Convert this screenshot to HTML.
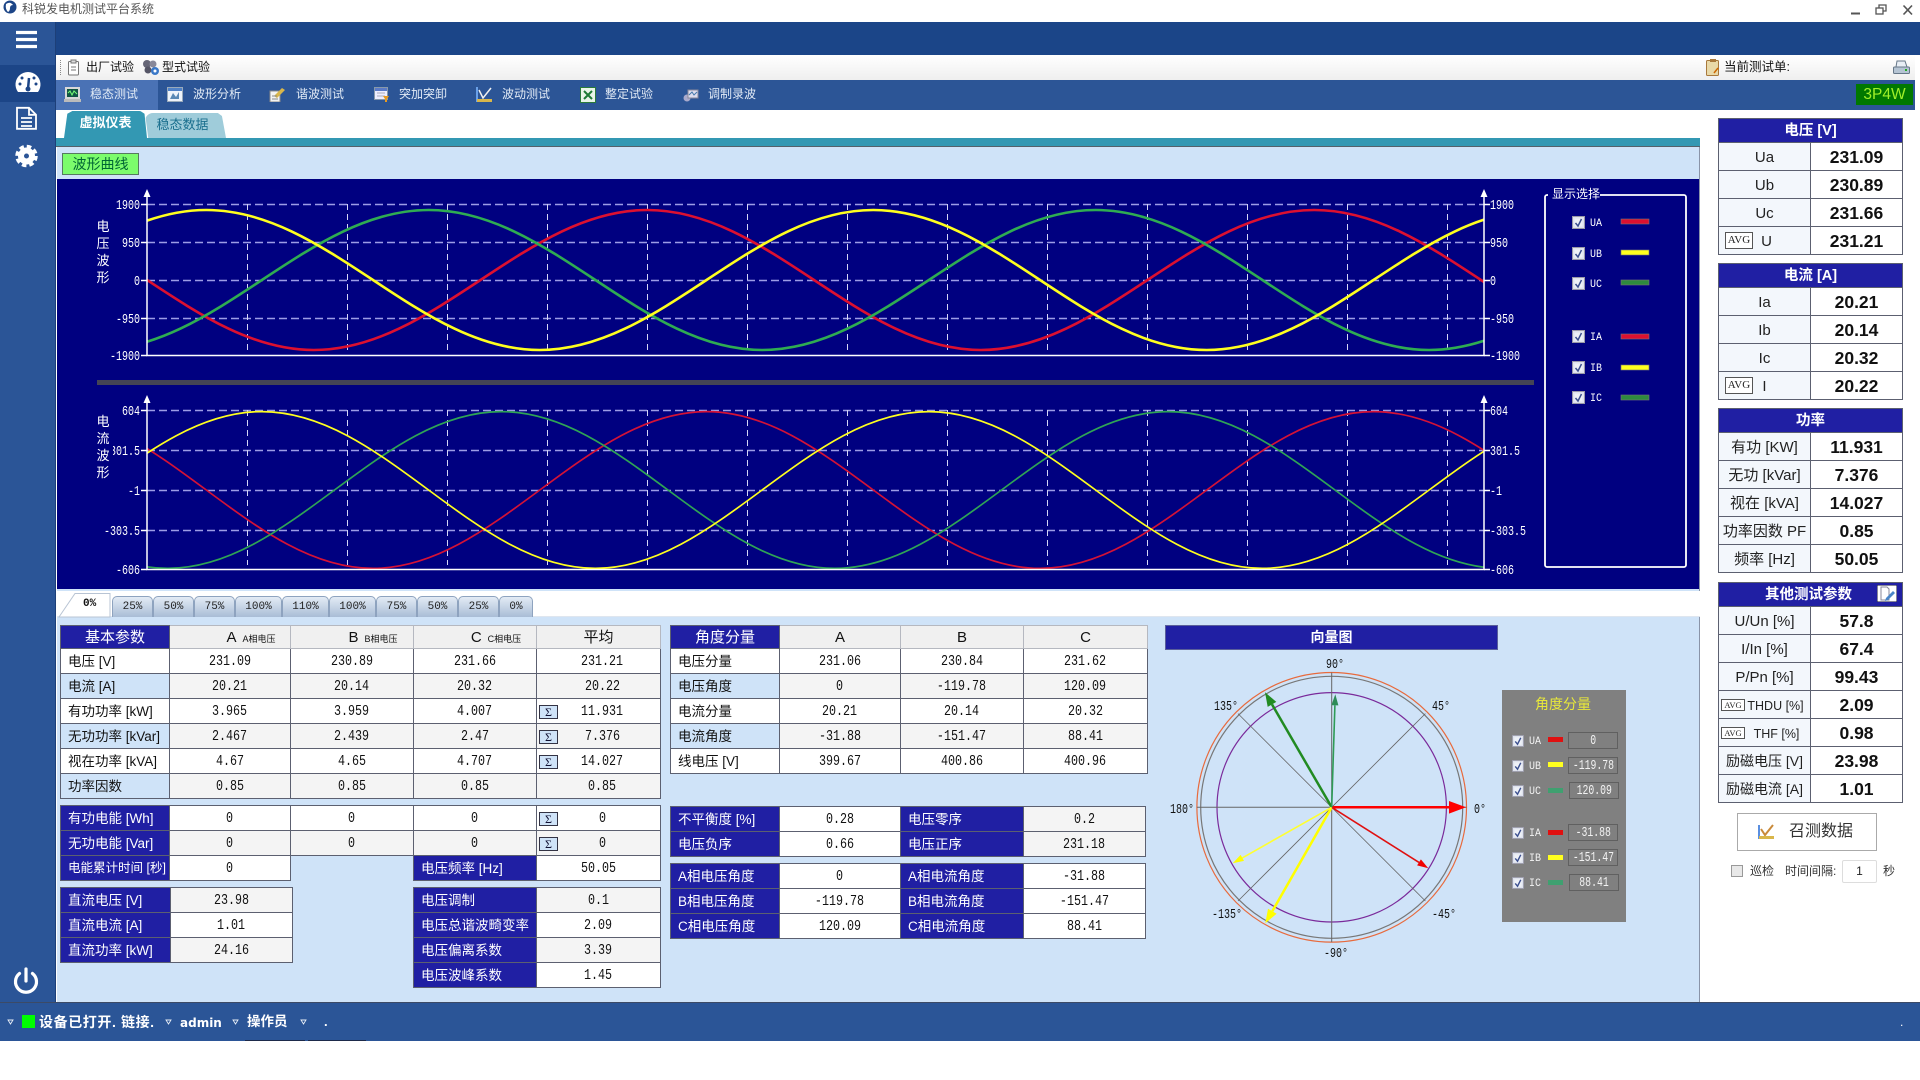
<!DOCTYPE html>
<html lang="zh"><head><meta charset="utf-8"><title>科锐发电机测试平台系统</title>
<style>
*{box-sizing:border-box}
html,body{margin:0;padding:0;width:1920px;height:1080px;overflow:hidden;background:#fff;font-family:"Liberation Sans","Noto Sans CJK SC",sans-serif;color:#111}
.a{position:absolute}
.tx{position:absolute;white-space:nowrap;line-height:1}
table{position:absolute;border-collapse:collapse;table-layout:fixed;font-size:13.5px}
td{box-sizing:border-box;height:25px;padding:1px 0 0;border:1px solid #5c6070;text-align:center;white-space:nowrap;overflow:hidden;line-height:1;position:relative}
td.l{text-align:left;padding-left:7px}
td.n{background:#201fa3;color:#fff}
td.w{background:#fff}
td.g{background:#f4f4f4}
td.b{background:#cfe3f8}
td.e{border:none;background:transparent}
tr.h td{height:23px;background:#f0f0f0;border-color:#b5b8c0;font-size:15px}
tr.h td.n{background:#201fa3;color:#fff;border-color:#5c6070}
tr.h td.p{padding-left:42px}
.v{display:inline-block;font:15px "Liberation Mono",monospace;transform:scaleX(.78)}
.s{position:absolute;left:2px;top:6px;width:19px;height:14px;background:#cfe3f8;border:1px solid #334;font:12px/12px "Liberation Serif",serif;text-align:center;color:#113}
.sm{font-size:9px;margin-left:6px}
.ph{padding-left:8px}
table.r{font-size:15px;color:#222}
table.r td{height:28px}
table.r tr.t td{height:24px;background:#201fa3;color:#fff;font-weight:bold;font-size:14.5px;padding-top:2px}
table.r td.k{background:#f3f7fc}
table.r td.d{background:#fff;font-weight:bold;font-size:17.5px;color:#111;padding-top:2px}
.avg{position:absolute;left:6px;top:5px;width:28px;height:17px;background:#fff;border:1px solid #555;font:11px/15px "Liberation Serif",serif;text-align:center;color:#222}
.avs{position:absolute;left:2px;top:8px;width:24px;height:12px;background:#fff;border:1px solid #555;font:8.5px/10px "Liberation Serif",serif;text-align:center;color:#222}
.tab{position:absolute;top:596px;height:21px;background:linear-gradient(#e3ebf5,#a9bdd6);border:1px solid #8ea3bf;border-bottom:none;border-radius:5px 5px 0 0;font:11px/20px "Liberation Mono",monospace;text-align:center;color:#222}
.nv{position:absolute;top:87px;font-size:12px;line-height:14px;color:#e2ebf6;white-space:nowrap}
.ab{position:absolute;width:50px;height:17px;border:1px solid #606060;color:#f2f2f2;text-align:center;line-height:14px;overflow:hidden}
.ab .v{font-size:14px;transform:scaleX(.7);margin:0 -12px}
</style></head><body>

<!-- title bar -->
<svg class="a" style="left:2px;top:0" width="16" height="15" viewBox="0 0 16 15"><circle cx="8" cy="7" r="6.5" fill="#1c4587"/><path d="M4 4q4-3 7 1q-3 0-3 3t-2 4q-3-3-2-8z" fill="#fff"/></svg>
<div class="tx" style="left:22px;top:3px;font-size:12px;color:#555">科锐发电机测试平台系统</div>
<svg class="a" style="left:1845px;top:0" width="75" height="20" viewBox="0 0 75 20" fill="none" stroke="#555" stroke-width="1.3"><path d="M6 13.5h9" stroke-width="2"/><rect x="31" y="8" width="7" height="6"/><path d="M34 8V5h7v6h-3"/><path d="M58.500 5.500l8.500 9m0-9l-8.500 9" stroke-width="1.600"/></svg>

<!-- bands -->
<div class="a" style="left:0;top:22px;width:1920px;height:33px;background:#1b4588"></div>
<div class="a" style="left:55px;top:55px;width:1860px;height:25px;background:linear-gradient(#fff,#efefef)"></div>
<div class="a" style="left:55px;top:80px;width:1860px;height:30px;background:#2c5596"></div>
<div class="a" style="left:55px;top:80px;width:103px;height:30px;background:#4a72b5"></div>
<div class="a" style="left:0;top:22px;width:56px;height:980px;background:#2b5597;border-right:1px solid #1d3f78"></div>
<div class="a" style="left:0;top:65px;width:55px;height:37px;background:#1c4587"></div>

<!-- main panel -->
<div class="a" style="left:56px;top:138px;width:1644px;height:9px;background:#3398b3;border-bottom:1px solid #55606a"></div>
<div class="a" style="left:57px;top:147px;width:1643px;height:855px;background:#cfe3f8;border-right:1px solid #8a94a8"></div>
<div class="a" style="left:57px;top:179px;width:1642px;height:410px;background:#000080"></div>
<div class="a" style="left:57px;top:591px;width:1643px;height:26px;background:#fff;border-bottom:1px solid #dfe6ef"></div>
<div class="a" style="left:64px;top:111px;width:83px;height:27px;background:#3398b3;border-radius:8px 8px 0 0;color:#fff;font-weight:bold;font-size:13px;line-height:24px;text-align:center;clip-path:polygon(0 100%,4% 10%,10% 0,92% 0,97% 10%,100% 100%)">虚拟仪表</div>
<div class="a" style="left:145px;top:113px;width:81px;height:25px;background:#9fccda;border-radius:8px 8px 0 0;color:#1a6f8e;font-size:13px;line-height:24px;text-align:center;padding-right:6px;clip-path:polygon(0 0,90% 0,95% 12%,100% 100%,4% 100%)">稳态数据</div>
<div class="a" style="left:62px;top:153px;width:77px;height:22px;background:#7cfc6c;border:1px solid #557a60;font-size:14px;line-height:20px;text-align:center;color:#063">波形曲线</div>

<!-- toolbar -->
<div class="a" style="left:60px;top:60px;width:0;height:15px;border-left:1px dotted #888"></div>
<svg class="a" style="left:67px;top:59px" width="14" height="17" viewBox="0 0 14 17" fill="#fff" stroke="#777"><rect x="1.500" y="2.500" width="10" height="13.500" rx="1"/><rect x="4" y="1" width="5" height="3" fill="#ddd"/><path d="M4 8h5M4 11h5"/></svg>
<div class="tx" style="left:86px;top:61px;font-size:12px;color:#111">出厂试验</div>
<svg class="a" style="left:142px;top:59px" width="18" height="17" viewBox="0 0 18 17"><circle cx="5" cy="5" r="4" fill="#667"/><circle cx="11" cy="5" r="3.500" fill="#889"/><circle cx="6" cy="11" r="3.500" fill="#556"/><circle cx="13" cy="12" r="4" fill="#3a78c8"/><circle cx="13" cy="12" r="1.500" fill="#fff"/></svg>
<div class="tx" style="left:162px;top:61px;font-size:12px;color:#111">型式试验</div>
<svg class="a" style="left:1706px;top:59px" width="14" height="17" viewBox="0 0 14 17"><rect x=".5" y="1.500" width="12" height="15" rx="1" fill="#e9d9a8" stroke="#a8793c"/><rect x="4" y="0" width="6" height="3" fill="#a8793c"/><path d="M8 14l4-5" stroke="#c60" stroke-width="1.500"/></svg>
<div class="tx" style="left:1724px;top:61px;font-size:12.5px;color:#111">当前测试单:</div>
<svg class="a" style="left:1893px;top:60px" width="17" height="15" viewBox="0 0 17 15"><path d="M4 1h8l2 6H3z" fill="#e8eef5" stroke="#678"/><rect x=".5" y="7" width="16" height="6.500" rx="1" fill="#b5c4d3" stroke="#678"/><rect x="12" y="9" width="2" height="2" fill="#2a2"/></svg>

<!-- nav -->
<svg class="a" style="left:64px;top:87px" width="17" height="16" viewBox="0 0 17 16"><rect x="1" y="0" width="15" height="12" fill="#d8d8d8"/><rect x="3" y="2" width="11" height="8" fill="#154"/><path d="M4 6l2-2 2 4 2-4 3 3" stroke="#7f7" fill="none"/><rect x="0" y="12" width="17" height="3" fill="#bbb"/></svg>
<div class="nv" style="left:90px">稳态测试</div>
<svg class="a" style="left:167px;top:87px" width="16" height="15" viewBox="0 0 16 15"><rect x=".5" y=".5" width="15" height="14" fill="#eef3fa" stroke="#9ab"/><rect x="1" y="1" width="14" height="3" fill="#4f81c7"/><path d="M3 12l3-6 3 4 3-5v7z" fill="#5a88b5"/></svg>
<div class="nv" style="left:193px">波形分析</div>
<svg class="a" style="left:269px;top:87px" width="17" height="15" viewBox="0 0 17 15"><rect x="1" y="4" width="10" height="11" fill="#f3f3f3" stroke="#888"/><path d="M5 9l8-8 3 2-8 8z" fill="#d9b64a"/><path d="M3 9h5M3 12h6" stroke="#888"/></svg>
<div class="nv" style="left:296px">谐波测试</div>
<svg class="a" style="left:374px;top:87px" width="16" height="16" viewBox="0 0 16 16"><rect x=".5" y=".5" width="13" height="12" fill="#eef" stroke="#89a"/><rect x="1" y="1" width="12" height="3" fill="#5a7ac7"/><path d="M3 6h8M3 9h8" stroke="#aab"/><path d="M9 9h6l-2 3v3h-2v-3z" fill="#e89a20"/></svg>
<div class="nv" style="left:399px">突加突卸</div>
<svg class="a" style="left:476px;top:86px" width="17" height="17" viewBox="0 0 17 17"><path d="M1 1v14h15" fill="none" stroke="#6aa0e8" stroke-width="2"/><path d="M3 4l4 8 8-10" fill="none" stroke="#f0f0f0" stroke-width="1.500"/><rect x="1" y="13" width="15" height="3" fill="#d9b64a"/></svg>
<div class="nv" style="left:502px">波动测试</div>
<svg class="a" style="left:580px;top:87px" width="16" height="16" viewBox="0 0 16 16"><rect x=".5" y=".5" width="15" height="15" fill="#e8f4e8" stroke="#2a7a3a"/><path d="M4 4l8 8m0-8l-8 8" stroke="#1d7a35" stroke-width="2"/></svg>
<div class="nv" style="left:605px">整定试验</div>
<svg class="a" style="left:682px;top:87px" width="17" height="16" viewBox="0 0 17 16"><circle cx="5" cy="11" r="3.500" fill="#aac"/><rect x="6" y="3" width="10" height="8" fill="#dde" stroke="#889"/><path d="M7 8l3-3 2 3 3-3" stroke="#47a" fill="none"/></svg>
<div class="nv" style="left:708px">调制录波</div>
<div class="a" style="left:1856px;top:84px;width:57px;height:21px;background:#007800;color:#9ff028;font-size:15.5px;line-height:21px;text-align:center">3P4W</div>

<!-- sidebar icons -->
<svg class="a" style="left:0;top:22px" width="56" height="980" viewBox="0 22 56 980">
<path d="M16 32.500h21M16 39.500h21M16 46.500h21" stroke="#fff" stroke-width="3.200"/>
<path d="M18 92a12.500 12.500 0 1 1 20 0z" fill="#fff"/>
<path d="M28 89l1-11" stroke="#1c4587" stroke-width="2.500"/><circle cx="28" cy="89" r="2.500" fill="#1c4587"/>
<circle cx="20" cy="84" r="1.500" fill="#1c4587"/><circle cx="22" cy="78" r="1.500" fill="#1c4587"/><circle cx="34" cy="78" r="1.500" fill="#1c4587"/><circle cx="36" cy="84" r="1.500" fill="#1c4587"/>
<path d="M17 107.800h12l7 7v14H17zM29 107.800v7h7M21 118h11M21 122h11M21 126h11" fill="none" stroke="#fff" stroke-width="1.800"/>
<circle cx="26.500" cy="156" r="5.500" fill="none" stroke="#fff" stroke-width="6"/>
<circle cx="26.500" cy="156" r="9.500" fill="none" stroke="#fff" stroke-width="3.500" stroke-dasharray="4.500 2.960"/>
<path d="M19.500 973.500a10.500 10.500 0 1 0 13 0M26 969v12" fill="none" stroke="#fff" stroke-width="3.200" stroke-linecap="round"/>
</svg>

<!-- charts & vector diagram -->
<svg class="a" style="left:0;top:0" width="1920" height="1080" viewBox="0 0 1920 1080">
<defs>
<path id="s" fill="none" vector-effect="non-scaling-stroke" d="M0 0c54.400 35.900 106.400 70 166.750 70c60.350 0 112.350-34.100 166.750-70c54.400-35.900 106.400-70 166.750-70c60.350 0 112.350 34.100 166.750 70c54.400 35.900 106.400 70 166.750 70c60.350 0 112.350-34.100 166.750-70c54.400-35.900 106.400-70 166.750-70c60.350 0 112.350 34.100 166.750 70c54.400 35.900 106.400 70 166.750 70c60.350 0 112.350-34.100 166.750-70c54.400-35.900 106.400-70 166.750-70c60.350 0 112.350 34.100 166.750 70"/>
<clipPath id="c"><rect x="147" y="190" width="1337" height="400"/></clipPath>
<symbol id="ck" viewBox="0 0 13 13"><rect x=".5" y=".5" width="12" height="12" fill="#dfe3ee" stroke="#9a9aa8"/><rect x="2.500" y="2.500" width="8" height="8" fill="#eef1f7"/><path d="M3.500 7l2.500 3 3.500-7" fill="none" stroke="#3b4f8f" stroke-width="1.500"/></symbol>
<style>
.yt{font-family:"Liberation Mono",monospace;font-size:14px;fill:#fff}
.dg{font-family:"Liberation Mono",monospace;font-size:14px;fill:#111}
.cn{font-size:13px;fill:#fff;font-family:"Noto Sans CJK SC",sans-serif}
</style>
</defs>
<!-- grid -->
<g fill="none" stroke="#9d9de6" stroke-width="1.500" stroke-dasharray="8 4">
<path d="M147 204.500H1484M147 242.500H1484M147 280.500H1484M147 318.500H1484"/>
<path d="M147 410.500H1484M147 450.500H1484M147 490.500H1484M147 530.500H1484"/>
</g>
<g fill="none" stroke="#d5d5f5" stroke-width="1" stroke-dasharray="6 4">
<path d="M247.500 204V350M347.500 204V350M447.500 204V350M547.500 204V350M647.500 204V350M747.500 204V350M847.500 204V350M947.500 204V350M1047.500 204V350M1147.500 204V350M1247.500 204V350M1347.500 204V350M1447.500 204V350"/>
<path d="M247.500 410V565M347.500 410V565M447.500 410V565M547.500 410V565M647.500 410V565M747.500 410V565M847.500 410V565M947.500 410V565M1047.500 410V565M1147.500 410V565M1247.500 410V565M1347.500 410V565M1447.500 410V565"/>
</g>
<!-- waves -->
<g clip-path="url(#c)" fill="none">
<use href="#s" transform="translate(147,280)" stroke="#dc1030" stroke-width="2.600"/>
<use href="#s" transform="translate(-71.600,280)" stroke="#2fac52" stroke-width="2.600"/>
<use href="#s" transform="translate(-294,280)" stroke="#ffff1e" stroke-width="2.600"/>
<use href="#s" transform="translate(-460.700,490) scale(1,1.120)" stroke="#d41236" stroke-width="1.700"/>
<use href="#s" transform="translate(1,490) scale(1,1.120)" stroke="#2fa455" stroke-width="1.700"/>
<use href="#s" transform="translate(-238.400,490) scale(1,1.120)" stroke="#ffff1e" stroke-width="1.700"/>
</g>
<!-- axes -->
<g stroke="#fff" stroke-width="1.500" fill="none">
<path d="M147 196V355.500H1484V196M147 402V569.500H1484V402"/>
<path d="M141 204.500h6M141 242.500h6M141 280.500h6M141 318.500h6M141 355.500h6M1484 204.500h6M1484 242.500h6M1484 280.500h6M1484 318.500h6M1484 355.500h6"/>
<path d="M141 410.500h6M141 450.500h6M141 490.500h6M141 530.500h6M141 569.500h6M1484 410.500h6M1484 450.500h6M1484 490.500h6M1484 530.500h6M1484 569.500h6"/>
</g>
<g fill="#fff"><path d="M147 189l-3.500 8h7zM1484 189l-3.500 8h7zM147 395l-3.500 8h7zM1484 395l-3.500 8h7z"/></g>
<rect x="97" y="380" width="1437" height="5" fill="#444455"/>
<!-- y labels -->
<text class="yt" x="116" y="209" textLength="24" lengthAdjust="spacingAndGlyphs">1900</text>
<text class="yt" x="122" y="247" textLength="18" lengthAdjust="spacingAndGlyphs">950</text>
<text class="yt" x="134" y="285" textLength="6" lengthAdjust="spacingAndGlyphs">0</text>
<text class="yt" x="116" y="323" textLength="24" lengthAdjust="spacingAndGlyphs">-950</text>
<text class="yt" x="110" y="360" textLength="30" lengthAdjust="spacingAndGlyphs">-1900</text>
<text class="yt" x="122" y="415" textLength="18" lengthAdjust="spacingAndGlyphs">604</text>
<text class="yt" x="110" y="455" textLength="30" lengthAdjust="spacingAndGlyphs">301.5</text>
<rect x="106" y="443" width="7" height="14" fill="#000080"/>
<text class="yt" x="128" y="495" textLength="12" lengthAdjust="spacingAndGlyphs">-1</text>
<text class="yt" x="104" y="535" textLength="36" lengthAdjust="spacingAndGlyphs">-303.5</text>
<text class="yt" x="116" y="574" textLength="24" lengthAdjust="spacingAndGlyphs">-606</text>
<text class="yt" x="1490" y="209" textLength="24" lengthAdjust="spacingAndGlyphs">1900</text>
<text class="yt" x="1490" y="247" textLength="18" lengthAdjust="spacingAndGlyphs">950</text>
<text class="yt" x="1490" y="285" textLength="6" lengthAdjust="spacingAndGlyphs">0</text>
<text class="yt" x="1490" y="323" textLength="24" lengthAdjust="spacingAndGlyphs">-950</text>
<text class="yt" x="1490" y="360" textLength="30" lengthAdjust="spacingAndGlyphs">-1900</text>
<text class="yt" x="1490" y="415" textLength="18" lengthAdjust="spacingAndGlyphs">604</text>
<text class="yt" x="1490" y="455" textLength="30" lengthAdjust="spacingAndGlyphs">301.5</text>
<text class="yt" x="1490" y="495" textLength="12" lengthAdjust="spacingAndGlyphs">-1</text>
<text class="yt" x="1490" y="535" textLength="36" lengthAdjust="spacingAndGlyphs">-303.5</text>
<text class="yt" x="1490" y="574" textLength="24" lengthAdjust="spacingAndGlyphs">-606</text>
<g text-anchor="middle">
<text class="cn" x="103" y="231">电</text><text class="cn" x="103" y="248">压</text><text class="cn" x="103" y="265">波</text><text class="cn" x="103" y="282">形</text>
<text class="cn" x="103" y="426">电</text><text class="cn" x="103" y="443">流</text><text class="cn" x="103" y="460">波</text><text class="cn" x="103" y="477">形</text>
</g>
<!-- legend box -->
<path d="M1548 195h-1a2 2 0 0 0-2 2V565a2 2 0 0 0 2 2H1684a2 2 0 0 0 2-2V197a2 2 0 0 0-2-2H1600" fill="none" stroke="#fff" stroke-width="1.800"/>
<text class="cn" x="1552" y="198" style="font-size:12px">显示选择</text>
<use href="#ck" x="1572" y="216" width="13" height="13"/><use href="#ck" x="1572" y="247" width="13" height="13"/><use href="#ck" x="1572" y="277" width="13" height="13"/>
<use href="#ck" x="1572" y="330" width="13" height="13"/><use href="#ck" x="1572" y="361" width="13" height="13"/><use href="#ck" x="1572" y="391" width="13" height="13"/>
<g style="font-family:'Liberation Mono',monospace;font-size:11px;fill:#fff">
<text x="1590" y="226" textLength="12" lengthAdjust="spacingAndGlyphs">UA</text><text x="1590" y="257" textLength="12" lengthAdjust="spacingAndGlyphs">UB</text><text x="1590" y="287" textLength="12" lengthAdjust="spacingAndGlyphs">UC</text>
<text x="1590" y="340" textLength="12" lengthAdjust="spacingAndGlyphs">IA</text><text x="1590" y="371" textLength="12" lengthAdjust="spacingAndGlyphs">IB</text><text x="1590" y="401" textLength="12" lengthAdjust="spacingAndGlyphs">IC</text>
</g>
<g stroke="#777" stroke-width=".6">
<rect x="1621" y="219" width="28" height="5" fill="#dc1030"/><rect x="1621" y="250" width="28" height="5" fill="#ffff1e"/><rect x="1621" y="280" width="28" height="5" fill="#2e8b3e"/>
<rect x="1621" y="334" width="28" height="5" fill="#dc1030"/><rect x="1621" y="365" width="28" height="5" fill="#ffff1e"/><rect x="1621" y="395" width="28" height="5" fill="#2e8b3e"/>
</g>
<!-- first tab slant -->
<path d="M59 617L75 593.500H110V617z" fill="#fff" stroke="#b8c4d4"/>
<!-- vector diagram -->
<g fill="none">
<circle cx="1331.700" cy="807.300" r="134.800" stroke="#e86a3c" stroke-width="1.200"/>
<circle cx="1331.700" cy="807.300" r="131" stroke="#777" stroke-width="1.200"/>
<circle cx="1331.700" cy="807.300" r="114.700" stroke="#7a2a9a" stroke-width="1.200"/>
<path d="M1196.900 807.300H1466.500M1331.700 672.500V942.100" stroke="#666" stroke-width="1"/>
<path d="M1238 713.600L1425.400 901M1238 901L1425.400 713.600" stroke="#666" stroke-width=".8"/>
<path d="M1331.700 807.300L1452 807.300" stroke="#f00" stroke-width="2.500"/>
<path d="M1331.700 807.300L1272 704.400" stroke="#228b22" stroke-width="2.500"/>
<path d="M1331.700 807.300L1272.300 911.200" stroke="#ffff00" stroke-width="2.500"/>
<path d="M1331.700 807.300L1419 862.400" stroke="#e01010" stroke-width="1.600"/>
<path d="M1331.700 807.300L1242.300 857.900" stroke="#ffff30" stroke-width="1.600"/>
<path d="M1331.700 807.300L1334.900 705.300" stroke="#2e9b57" stroke-width="1.600"/>
</g>
<path d="M1466 807.300L1449 801V813.600z" fill="#f00"/>
<path d="M1265 692.300L1276.300 701.900L1267.700 706.900z" fill="#228b22"/>
<path d="M1265.300 923.300L1276.600 913.700L1268 908.700z" fill="#ffff00"/>
<path d="M1428.300 868.300L1417.100 865.400L1420.900 859.400z" fill="#f00000"/>
<path d="M1232.700 863.300L1244 860.900L1240.600 854.900z" fill="#ffff00"/>
<path d="M1335.300 694.300L1338.400 705.400L1331.400 705.200z" fill="#2e8b57"/>
<text class="dg" x="1326" y="668" textLength="18" lengthAdjust="spacingAndGlyphs">90°</text>
<text class="dg" x="1432" y="710" textLength="18" lengthAdjust="spacingAndGlyphs">45°</text>
<text class="dg" x="1214" y="710" textLength="24" lengthAdjust="spacingAndGlyphs">135°</text>
<text class="dg" x="1170" y="813" textLength="24" lengthAdjust="spacingAndGlyphs">180°</text>
<text class="dg" x="1474" y="813" textLength="12" lengthAdjust="spacingAndGlyphs">0°</text>
<text class="dg" x="1212" y="918" textLength="30" lengthAdjust="spacingAndGlyphs">-135°</text>
<text class="dg" x="1432" y="918" textLength="24" lengthAdjust="spacingAndGlyphs">-45°</text>
<text class="dg" x="1324" y="957" textLength="24" lengthAdjust="spacingAndGlyphs">-90°</text>
</svg>

<!-- percent tabs -->
<div class="tx" style="left:83px;top:598px;font:bold 11px 'Liberation Mono',monospace;color:#111">0%</div>
<div class="tab" style="left:112px;width:41px">25%</div>
<div class="tab" style="left:153px;width:41px">50%</div>
<div class="tab" style="left:194px;width:41px">75%</div>
<div class="tab" style="left:235px;width:47px">100%</div>
<div class="tab" style="left:282px;width:47px">110%</div>
<div class="tab" style="left:329px;width:47px">100%</div>
<div class="tab" style="left:376px;width:41px">75%</div>
<div class="tab" style="left:417px;width:41px">50%</div>
<div class="tab" style="left:458px;width:41px">25%</div>
<div class="tab" style="left:499px;width:34px">0%</div>

<!-- table 1 -->
<table style="left:60px;top:625px;width:600px"><colgroup><col style="width:109px"><col style="width:121px"><col style="width:123px"><col style="width:123px"><col style="width:124px"></colgroup>
<tr class="h"><td class="n">基本参数</td><td class="p">A<span class="sm">A相电压</span></td><td class="p">B<span class="sm">B相电压</span></td><td class="p">C<span class="sm">C相电压</span></td><td>平均</td></tr>
<tr><td class="l w">电压 [V]</td><td class="w"><span class="v">231.09</span></td><td class="w"><span class="v">230.89</span></td><td class="w"><span class="v">231.66</span></td><td class="w ph"><span class="v">231.21</span></td></tr>
<tr><td class="l b">电流 [A]</td><td class="g"><span class="v">20.21</span></td><td class="g"><span class="v">20.14</span></td><td class="g"><span class="v">20.32</span></td><td class="g ph"><span class="v">20.22</span></td></tr>
<tr><td class="l w">有功功率 [kW]</td><td class="w"><span class="v">3.965</span></td><td class="w"><span class="v">3.959</span></td><td class="w"><span class="v">4.007</span></td><td class="w ph"><span class="s">Σ</span><span class="v">11.931</span></td></tr>
<tr><td class="l b">无功功率 [kVar]</td><td class="g"><span class="v">2.467</span></td><td class="g"><span class="v">2.439</span></td><td class="g"><span class="v">2.47</span></td><td class="g ph"><span class="s">Σ</span><span class="v">7.376</span></td></tr>
<tr><td class="l w">视在功率 [kVA]</td><td class="w"><span class="v">4.67</span></td><td class="w"><span class="v">4.65</span></td><td class="w"><span class="v">4.707</span></td><td class="w ph"><span class="s">Σ</span><span class="v">14.027</span></td></tr>
<tr><td class="l b">功率因数</td><td class="g"><span class="v">0.85</span></td><td class="g"><span class="v">0.85</span></td><td class="g"><span class="v">0.85</span></td><td class="g ph"><span class="v">0.85</span></td></tr>
</table>

<!-- table 2 -->
<table style="left:60px;top:805px;width:600px"><colgroup><col style="width:109px"><col style="width:121px"><col style="width:123px"><col style="width:123px"><col style="width:124px"></colgroup>
<tr><td class="l n">有功电能 [Wh]</td><td class="w"><span class="v">0</span></td><td class="w"><span class="v">0</span></td><td class="w"><span class="v">0</span></td><td class="w ph"><span class="s">Σ</span><span class="v">0</span></td></tr>
<tr><td class="l n">无功电能 [Var]</td><td class="g"><span class="v">0</span></td><td class="g"><span class="v">0</span></td><td class="g"><span class="v">0</span></td><td class="g ph"><span class="s">Σ</span><span class="v">0</span></td></tr>
<tr><td class="l n" style="font-size:12.5px">电能累计时间 [秒]</td><td class="w"><span class="v">0</span></td><td class="e"></td><td class="l n">电压频率 [Hz]</td><td class="w"><span class="v">50.05</span></td></tr>
</table>

<!-- table 3 -->
<table style="left:60px;top:887px;width:232px"><colgroup><col style="width:110px"><col style="width:122px"></colgroup>
<tr><td class="l n">直流电压 [V]</td><td class="g"><span class="v">23.98</span></td></tr>
<tr><td class="l n">直流电流 [A]</td><td class="w"><span class="v">1.01</span></td></tr>
<tr><td class="l n">直流功率 [kW]</td><td class="g"><span class="v">24.16</span></td></tr>
</table>

<!-- table 4 -->
<table style="left:413px;top:887px;width:247px"><colgroup><col style="width:123px"><col style="width:124px"></colgroup>
<tr><td class="l n">电压调制</td><td class="g"><span class="v">0.1</span></td></tr>
<tr><td class="l n">电压总谐波畸变率</td><td class="w"><span class="v">2.09</span></td></tr>
<tr><td class="l n">电压偏离系数</td><td class="g"><span class="v">3.39</span></td></tr>
<tr><td class="l n">电压波峰系数</td><td class="w"><span class="v">1.45</span></td></tr>
</table>

<!-- angle tables -->
<table style="left:670px;top:625px;width:477px"><colgroup><col style="width:109px"><col style="width:121px"><col style="width:123px"><col style="width:124px"></colgroup>
<tr class="h"><td class="n">角度分量</td><td>A</td><td>B</td><td>C</td></tr>
<tr><td class="l w">电压分量</td><td class="w"><span class="v">231.06</span></td><td class="w"><span class="v">230.84</span></td><td class="w"><span class="v">231.62</span></td></tr>
<tr><td class="l b">电压角度</td><td class="g"><span class="v">0</span></td><td class="g"><span class="v">-119.78</span></td><td class="g"><span class="v">120.09</span></td></tr>
<tr><td class="l w">电流分量</td><td class="w"><span class="v">20.21</span></td><td class="w"><span class="v">20.14</span></td><td class="w"><span class="v">20.32</span></td></tr>
<tr><td class="l b">电流角度</td><td class="g"><span class="v">-31.88</span></td><td class="g"><span class="v">-151.47</span></td><td class="g"><span class="v">88.41</span></td></tr>
<tr><td class="l w">线电压 [V]</td><td class="w"><span class="v">399.67</span></td><td class="w"><span class="v">400.86</span></td><td class="w"><span class="v">400.96</span></td></tr>
</table>
<table style="left:670px;top:806px;width:475px"><colgroup><col style="width:109px"><col style="width:121px"><col style="width:123px"><col style="width:122px"></colgroup>
<tr><td class="l n">不平衡度 [%]</td><td class="w"><span class="v">0.28</span></td><td class="l n">电压零序</td><td class="g"><span class="v">0.2</span></td></tr>
<tr><td class="l n">电压负序</td><td class="w"><span class="v">0.66</span></td><td class="l n">电压正序</td><td class="g"><span class="v">231.18</span></td></tr>
</table>
<table style="left:670px;top:863px;width:475px"><colgroup><col style="width:109px"><col style="width:121px"><col style="width:123px"><col style="width:122px"></colgroup>
<tr><td class="l n">A相电压角度</td><td class="w"><span class="v">0</span></td><td class="l n">A相电流角度</td><td class="w"><span class="v">-31.88</span></td></tr>
<tr><td class="l n">B相电压角度</td><td class="w"><span class="v">-119.78</span></td><td class="l n">B相电流角度</td><td class="w"><span class="v">-151.47</span></td></tr>
<tr><td class="l n">C相电压角度</td><td class="w"><span class="v">120.09</span></td><td class="l n">C相电流角度</td><td class="w"><span class="v">88.41</span></td></tr>
</table>

<!-- vector title -->
<div class="a" style="left:1165px;top:625px;width:333px;height:25px;background:#201fa3;border:1px solid #5a5f9a;color:#fff;font-weight:bold;font-size:14px;line-height:23px;text-align:center">向量图</div>

<!-- angle panel -->
<div class="a" style="left:1502px;top:690px;width:124px;height:232px;background:#808080"></div>
<div class="tx" style="left:1535px;top:697px;font-size:14px;color:#e8e83a">角度分量</div>
<svg class="a" style="left:1502px;top:690px" width="70" height="232" viewBox="1502 690 70 232">
<use href="#ck" x="1512" y="735" width="12" height="12"/><use href="#ck" x="1512" y="760" width="12" height="12"/><use href="#ck" x="1512" y="785" width="12" height="12"/>
<use href="#ck" x="1512" y="827" width="12" height="12"/><use href="#ck" x="1512" y="852" width="12" height="12"/><use href="#ck" x="1512" y="877" width="12" height="12"/>
<g style="font-family:'Liberation Mono',monospace;font-size:11px;fill:#f2f2f2">
<text x="1529" y="744" textLength="12" lengthAdjust="spacingAndGlyphs">UA</text><text x="1529" y="769" textLength="12" lengthAdjust="spacingAndGlyphs">UB</text><text x="1529" y="794" textLength="12" lengthAdjust="spacingAndGlyphs">UC</text>
<text x="1529" y="836" textLength="12" lengthAdjust="spacingAndGlyphs">IA</text><text x="1529" y="861" textLength="12" lengthAdjust="spacingAndGlyphs">IB</text><text x="1529" y="886" textLength="12" lengthAdjust="spacingAndGlyphs">IC</text>
</g>
<rect x="1548" y="737" width="15" height="5" fill="#e01010"/><rect x="1548" y="762" width="15" height="5" fill="#ffff1e"/><rect x="1548" y="788" width="15" height="5" fill="#3fa070"/>
<rect x="1548" y="830" width="15" height="5" fill="#e01010"/><rect x="1548" y="855" width="15" height="5" fill="#ffff1e"/><rect x="1548" y="880" width="15" height="5" fill="#3fa070"/>
</svg>
<div class="ab" style="left:1568px;top:732px"><span class="v">0</span></div>
<div class="ab" style="left:1568px;top:757px"><span class="v">-119.78</span></div>
<div class="ab" style="left:1569px;top:782px"><span class="v">120.09</span></div>
<div class="ab" style="left:1568px;top:824px"><span class="v">-31.88</span></div>
<div class="ab" style="left:1568px;top:849px"><span class="v">-151.47</span></div>
<div class="ab" style="left:1569px;top:874px"><span class="v">88.41</span></div>

<!-- right tables -->
<table class="r" style="left:1718px;top:118px;width:184px"><colgroup><col style="width:92px"><col style="width:92px"></colgroup>
<tr class="t"><td colspan="2">电压 [V]</td></tr>
<tr><td class="k">Ua</td><td class="d">231.09</td></tr>
<tr><td class="k">Ub</td><td class="d">230.89</td></tr>
<tr><td class="k">Uc</td><td class="d">231.66</td></tr>
<tr><td class="k"><span class="avg">AVG</span><span style="margin-left:4px">U</span></td><td class="d">231.21</td></tr>
</table>
<table class="r" style="left:1718px;top:263px;width:184px"><colgroup><col style="width:92px"><col style="width:92px"></colgroup>
<tr class="t"><td colspan="2">电流 [A]</td></tr>
<tr><td class="k">Ia</td><td class="d">20.21</td></tr>
<tr><td class="k">Ib</td><td class="d">20.14</td></tr>
<tr><td class="k">Ic</td><td class="d">20.32</td></tr>
<tr><td class="k"><span class="avg">AVG</span>I</td><td class="d">20.22</td></tr>
</table>
<table class="r" style="left:1718px;top:408px;width:184px"><colgroup><col style="width:92px"><col style="width:92px"></colgroup>
<tr class="t"><td colspan="2">功率</td></tr>
<tr><td class="k">有功 [KW]</td><td class="d">11.931</td></tr>
<tr><td class="k">无功 [kVar]</td><td class="d">7.376</td></tr>
<tr><td class="k">视在 [kVA]</td><td class="d">14.027</td></tr>
<tr><td class="k">功率因数 PF</td><td class="d">0.85</td></tr>
<tr><td class="k">频率 [Hz]</td><td class="d">50.05</td></tr>
</table>
<table class="r" style="left:1718px;top:582px;width:184px"><colgroup><col style="width:92px"><col style="width:92px"></colgroup>
<tr class="t"><td colspan="2"><span style="margin-left:-4px">其他测试参数</span></td></tr>
<tr><td class="k">U/Un [%]</td><td class="d">57.8</td></tr>
<tr><td class="k">I/In [%]</td><td class="d">67.4</td></tr>
<tr><td class="k">P/Pn [%]</td><td class="d">99.43</td></tr>
<tr><td class="k"><span class="avs">AVG</span><span style="margin-left:22px;font-size:12.5px">THDU [%]</span></td><td class="d">2.09</td></tr>
<tr><td class="k"><span class="avs">AVG</span><span style="margin-left:24px;font-size:12.5px">THF [%]</span></td><td class="d">0.98</td></tr>
<tr><td class="k" style="font-size:14px">励磁电压 [V]</td><td class="d">23.98</td></tr>
<tr><td class="k" style="font-size:14px">励磁电流 [A]</td><td class="d">1.01</td></tr>
</table>
<svg class="a" style="left:1877px;top:585px" width="20" height="17" viewBox="0 0 20 17"><rect width="20" height="17" fill="#fff" stroke="#113" /><path d="M4 2h6l2 2v11H4z" fill="none" stroke="#889"/><path d="M9 13l7-7 2 2-7 7-3 1z" fill="#4a86c8"/></svg>

<!-- button -->
<div class="a" style="left:1737px;top:813px;width:140px;height:38px;background:#fff;border:1px solid #aaa"></div>
<svg class="a" style="left:1758px;top:824px" width="17" height="16" viewBox="0 0 17 16"><path d="M1 1v13h15" fill="none" stroke="#5a8fe0" stroke-width="2"/><path d="M3 5l4 6 8-10" fill="none" stroke="#c98a3a" stroke-width="2"/><rect x="1" y="12" width="15" height="3" fill="#d9b64a"/></svg>
<div class="tx" style="left:1789px;top:824px;font-size:16px;color:#333">召测数据</div>

<!-- patrol -->
<div class="a" style="left:1731px;top:865px;width:12px;height:12px;background:#e8e8e8;border:1px solid #999"></div>
<div class="tx" style="left:1750px;top:865px;font-size:12px;color:#333">巡检</div>
<div class="tx" style="left:1785px;top:865px;font-size:12px;color:#333">时间间隔:</div>
<div class="a" style="left:1842px;top:860px;width:35px;height:23px;background:#fff;border:1px solid #ddd;border-radius:2px;font-size:12px;line-height:21px;text-align:center;color:#222">1</div>
<div class="tx" style="left:1883px;top:865px;font-size:12px;color:#333">秒</div>

<!-- status bar -->
<div class="a" style="left:0;top:1002px;width:1920px;height:39px;background:#2b5597;border-top:1px solid #3c4a66"></div>
<div class="a" style="left:245px;top:1040px;width:60px;height:1px;background:#1d2a4a"></div>
<div class="a" style="left:308px;top:1040px;width:58px;height:1px;background:#1d2a4a"></div>
<div class="a" style="left:22px;top:1015px;width:13px;height:13px;background:#00ff00"></div>
<svg class="a" style="left:0;top:1002px" width="340" height="39" viewBox="0 0 340 39" fill="none" stroke="#e8eef6" stroke-width=".9"><path d="M8 18h5l-2.500 4zM166 18h5l-2.500 4zM233 18h5l-2.500 4zM301 18h5l-2.500 4z"/></svg>
<div class="tx" style="left:39px;top:1015px;font-size:14px;letter-spacing:.6px;font-weight:bold;color:#fff">设备已打开. 链接.</div>
<div class="tx" style="left:180px;top:1016px;font:bold 12px 'DejaVu Sans',sans-serif;color:#fff">admin</div>
<div class="tx" style="left:247px;top:1015px;font-size:13.5px;font-weight:bold;color:#fff">操作员</div>
<div class="tx" style="left:324px;top:1015px;font-size:13px;font-weight:bold;color:#fff">.</div>
<div class="tx" style="left:1900px;top:1016px;font-size:12px;color:#fff">.</div>
</body></html>
